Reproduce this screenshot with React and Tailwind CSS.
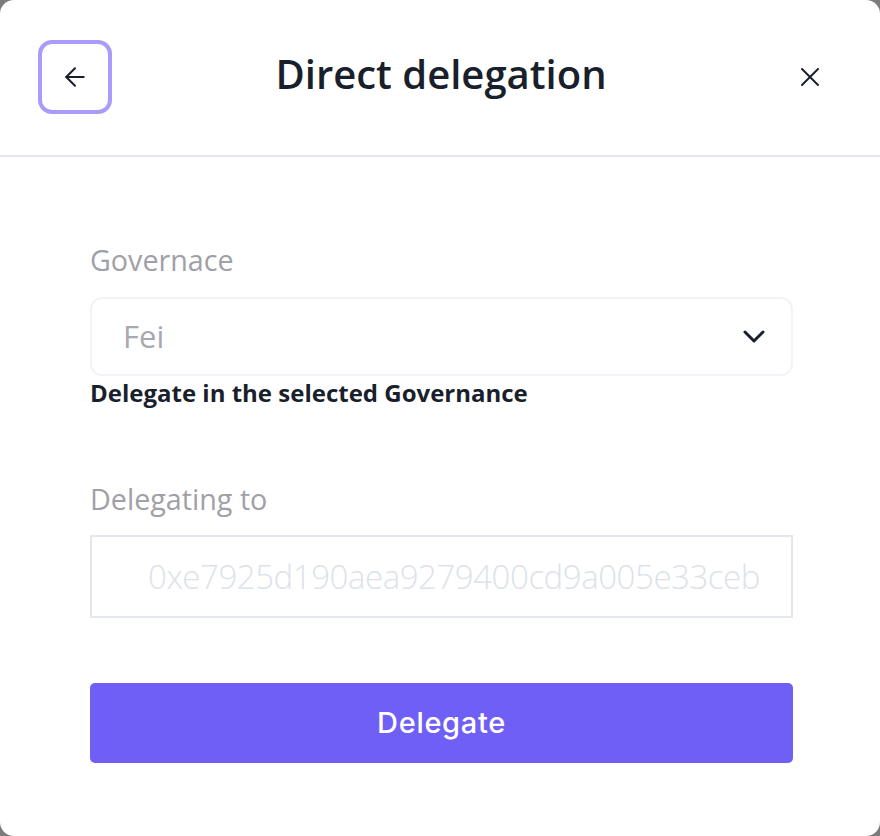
import React from "react";

export default function App() {
  return (
    <div className="w-[880px] h-[836px] bg-[#7b7b7b]" style={{ fontFamily: '"Open Sans", sans-serif' }}>
      <div className="w-full h-full bg-white rounded-[14px] flex flex-col">
        <div className="h-[157px] border-b-2 border-[#e5e8ee] grid grid-cols-[1fr_auto_1fr] items-center pl-[38px] pr-[54px] shrink-0">
          <div className="flex justify-start">
            <button className="w-[74px] h-[74px] rounded-[14px] border-[4px] border-[#a99cf9] flex items-center justify-center text-[#1a1f2c] -mt-[2px]">
              <svg width="30" height="30" viewBox="0 0 24 24" fill="none" stroke="currentColor" strokeWidth="1.6" strokeLinecap="round" strokeLinejoin="round">
                <path d="m12 19-7-7 7-7" />
                <path d="M19 12H5" />
              </svg>
            </button>
          </div>
          <h1 className="text-[40px] font-semibold text-[#1a1f2c] -mt-[7px] ml-[18px]">Direct delegation</h1>
          <div className="flex justify-end">
            <button className="text-[#1a1f2c] -mt-[2px]">
              <svg width="32" height="32" viewBox="0 0 24 24" fill="none" stroke="currentColor" strokeWidth="1.5" strokeLinecap="round" strokeLinejoin="round">
                <path d="M18 6 6 18" />
                <path d="m6 6 12 12" />
              </svg>
            </button>
          </div>
        </div>
        <div className="pl-[90px] pr-[87px] pt-[84px] flex flex-col">
          <label className="text-[28.7px] text-[#a0a0a8] leading-[38px]">Governace</label>
          <div className="mt-[18px] h-[79px] border-2 border-[#f1f3f8] rounded-[12px] flex items-center justify-between pl-[31px] pr-[25px]">
            <span className="text-[31px] text-[#a8a8b0]">Fei</span>
            <svg width="24" height="16" viewBox="0 0 24 16" fill="none" stroke="#1a1f2c" strokeWidth="3" strokeLinecap="round" strokeLinejoin="round">
              <polyline points="3,3 12,12 21,3" />
            </svg>
          </div>
          <p className="text-[24px] font-bold text-[#1a1f2c] leading-[30px] mt-[2px]">Delegate in the selected Governance</p>
          <label className="text-[28.7px] text-[#a0a0a8] leading-[38px] mt-[72px]">Delegating to</label>
          <div className="mt-[17px] h-[83px] border-2 border-[#e3e8ee] flex items-center pl-[56px] overflow-hidden">
            <span className="text-[33px] font-light text-[#dde2ea] whitespace-nowrap tracking-[-0.45px]">0xe7925d190aea9279400cd9a005e33ceb</span>
          </div>
          <button className="mt-[65px] h-[80px] bg-[#6f5ff6] rounded-[5px] text-white text-[29px] font-medium tracking-[0.7px]" style={{ fontFamily: 'Inter, sans-serif' }}>
            Delegate
          </button>
        </div>
      </div>
    </div>
  );
}
